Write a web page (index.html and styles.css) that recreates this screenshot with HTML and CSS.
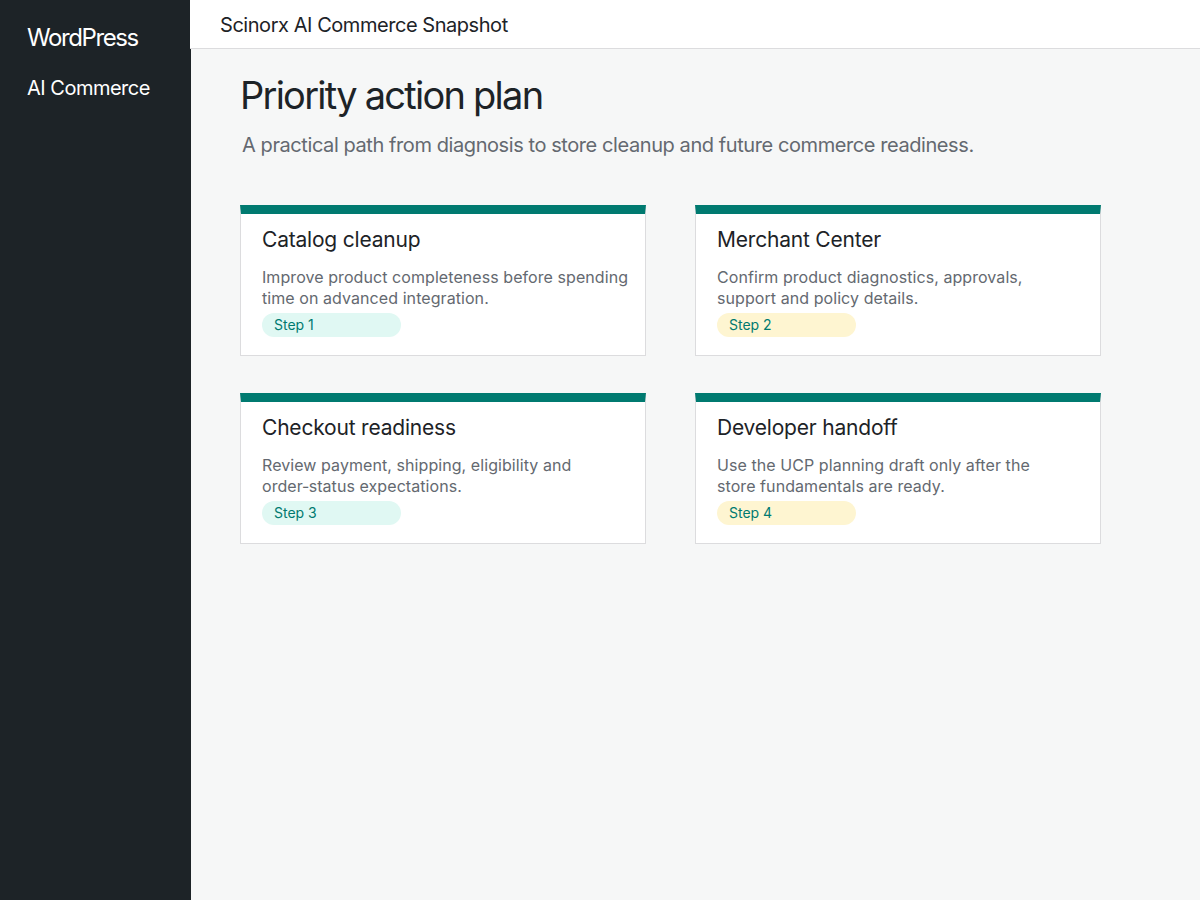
FILE: index.html
```html
<!DOCTYPE html>
<html lang="en">
<head>
<meta charset="utf-8">
<title>Scinorx AI Commerce Snapshot</title>
<link rel="stylesheet" href="styles.css">
</head>
<body>
<div class="layout">
  <aside class="sidebar">
    <div class="brand">WordPress</div>
    <nav class="nav"><a class="nav-item" href="#">AI Commerce</a></nav>
  </aside>
  <div class="main">
    <header class="topbar">Scinorx AI Commerce Snapshot</header>
    <main class="content">
      <h1 class="title">Priority action plan</h1>
      <p class="subtitle">A practical path from diagnosis to store cleanup and future commerce readiness.</p>
      <div class="grid">
        <section class="card">
          <h2 class="card-title">Catalog cleanup</h2>
          <p class="card-text">Improve product completeness before spending<br>time on advanced integration.</p>
          <span class="pill pill-green">Step 1</span>
        </section>
        <section class="card">
          <h2 class="card-title">Merchant Center</h2>
          <p class="card-text">Confirm product diagnostics, approvals,<br>support and policy details.</p>
          <span class="pill pill-yellow">Step 2</span>
        </section>
        <section class="card">
          <h2 class="card-title">Checkout readiness</h2>
          <p class="card-text">Review payment, shipping, eligibility and<br>order&#8209;status expectations.</p>
          <span class="pill pill-green">Step 3</span>
        </section>
        <section class="card">
          <h2 class="card-title">Developer handoff</h2>
          <p class="card-text">Use the UCP planning draft only after the<br>store fundamentals are ready.</p>
          <span class="pill pill-yellow">Step 4</span>
        </section>
      </div>
    </main>
  </div>
</div>
</body>
</html>
```
FILE: styles.css
```css
* { box-sizing: border-box; }
html, body { margin: 0; padding: 0; }
body {
  font-family: Inter, "Noto Sans", sans-serif;
  background: #f6f7f7;
  color: #1d2327;
}
.layout { display: flex; min-height: 900px; }
.sidebar {
  width: 191px;
  flex: none;
  background: #1d2327;
  color: #fff;
  padding: 23px 0 0 27px;
}
.brand { font-size: 24px; line-height: 30px; letter-spacing: -1.4px; }
.nav { margin-top: 22px; }
.nav-item {
  color: #fff;
  text-decoration: none;
  font-size: 20px;
  line-height: 26px;
  letter-spacing: -0.5px;
}
.main { flex: 1; display: flex; flex-direction: column; }
.topbar {
  height: 49px;
  background: #fff;
  border-bottom: 1px solid #dcdcde;
  margin-left: -1px;
  padding: 12px 0 0 30px;
  font-size: 20px;
  line-height: 26px;
  letter-spacing: -0.45px;
}
.content { padding: 20px 0 0 49px; }
.title {
  margin: 0;
  font-size: 38px;
  font-weight: 400;
  line-height: 52px;
  letter-spacing: -1.75px;
}
.subtitle {
  margin: 11px 0 0 2px;
  font-size: 20px;
  line-height: 26px;
  color: #646970;
  letter-spacing: -0.42px;
}
.grid {
  display: grid;
  grid-template-columns: 406px 406px;
  column-gap: 49px;
  row-gap: 37px;
  margin-top: 47px;
}
.card {
  background: #fff;
  border: 1px solid #dcdcde;
  border-top: 9px solid #007a70;
  padding: 12px 17px 17px 21px;
  height: 151px;
}
.card-title {
  margin: 0;
  font-size: 21px;
  font-weight: 400;
  line-height: 28px;
  letter-spacing: -0.2px;
}
.card-text {
  margin: 13px 0 4px;
  font-size: 16px;
  line-height: 21px;
  color: #646970;
  letter-spacing: 0.07px;
  white-space: nowrap;
}
.pill {
  display: block;
  width: 139px;
  height: 24px;
  border-radius: 12px;
  padding: 0 12px;
  font-size: 14px;
  line-height: 24px;
  color: #007a70;
}
.pill-green { background: #e0f8f3; }
.pill-yellow { background: #fef5d1; }
```
